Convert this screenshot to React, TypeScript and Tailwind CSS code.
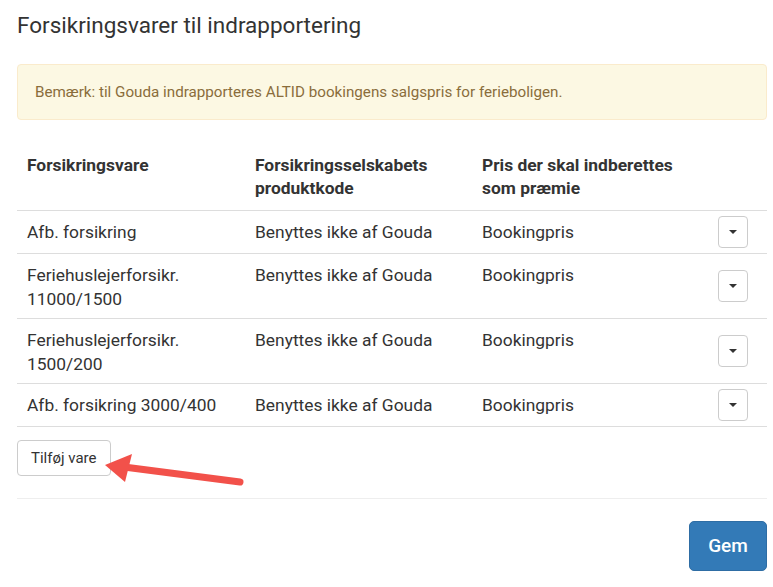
import { useState } from "react";

const ROWS = [
  { name: "Afb. forsikring", code: "Benyttes ikke af Gouda", price: "Bookingpris" },
  { name: "Feriehuslejerforsikr. 11000/1500", code: "Benyttes ikke af Gouda", price: "Bookingpris" },
  { name: "Feriehuslejerforsikr. 1500/200", code: "Benyttes ikke af Gouda", price: "Bookingpris" },
  { name: "Afb. forsikring 3000/400", code: "Benyttes ikke af Gouda", price: "Bookingpris" },
];

function Caret() {
  return (
    <svg width="8" height="4" viewBox="0 0 8 4" className="block">
      <path d="M0 0h8L4 4z" fill="#333" />
    </svg>
  );
}

export default function App() {
  const [rows] = useState(ROWS);

  return (
    <div className="relative h-[587px] overflow-hidden bg-white pt-[11px] pr-[6px] pl-[17px] font-['Roboto',sans-serif] text-[#333]">
      <h1 className="text-[22.5px] leading-[28px] font-normal">Forsikringsvarer til indrapportering</h1>

      {/* Note */}
      <div className="mt-[25px] rounded-[4px] border border-[#faebcc] bg-[#fcf8e3] px-[17px] py-[16px] text-[15.2px] leading-[22px] text-[#8a6d3b]">
        Bemærk: til Gouda indrapporteres ALTID bookingens salgspris for ferieboligen.
      </div>

      {/* Table */}
      <table className="mt-[24px] w-full table-fixed border-collapse text-[17.4px]">
        <colgroup>
          <col className="w-[228px]" />
          <col className="w-[227px]" />
          <col className="w-[237px]" />
          <col />
        </colgroup>
        <thead className="leading-[23px]">
          <tr className="border-b border-[#ddd]">
            <th className="px-[10px] py-[10px] text-left align-top font-bold">Forsikringsvare</th>
            <th className="px-[10px] py-[10px] text-left align-top font-bold">Forsikringsselskabets produktkode</th>
            <th className="px-[10px] py-[10px] text-left align-top font-bold">Pris der skal indberettes som præmie</th>
            <th />
          </tr>
        </thead>
        <tbody className="leading-[24px]">
          {rows.map((r) => (
            <tr key={r.name} className="border-b border-[#ddd]">
              <td className="px-[10px] pt-[9px] pb-[7px] align-top">{r.name}</td>
              <td className="px-[10px] pt-[9px] pb-[7px] align-top">{r.code}</td>
              <td className="px-[10px] pt-[9px] pb-[7px] align-top">{r.price}</td>
              <td className="py-[5px] pl-[9px] align-middle">
                <button className="flex h-[32px] w-[30px] items-center justify-center rounded-[4px] border border-[#ccc] bg-white">
                  <Caret />
                </button>
              </td>
            </tr>
          ))}
        </tbody>
      </table>

      <button className="mt-[13px] h-[36px] rounded-[4px] border border-[#ccc] bg-white px-[13px] text-[15px] text-[#333]">
        Tilføj vare
      </button>

      <hr className="mt-[22px] border-t border-[#eee]" />

      <div className="flex justify-end pt-[22px]">
        <button className="h-[50px] w-[78px] rounded-[5px] border border-[#2e6da4] bg-[#337ab7] text-[19px] font-medium text-white">
          Gem
        </button>
      </div>

      {/* Annotation arrow */}
      <svg className="pointer-events-none absolute left-[100px] top-[448px]" width="150" height="45" viewBox="0 0 150 45">
        <line x1="24" y1="19" x2="140" y2="34" stroke="#f2514a" strokeWidth="7" strokeLinecap="round" />
        <path d="M5 17 L32 6 L25 34 Z" fill="#f2514a" />
      </svg>
    </div>
  );
}
